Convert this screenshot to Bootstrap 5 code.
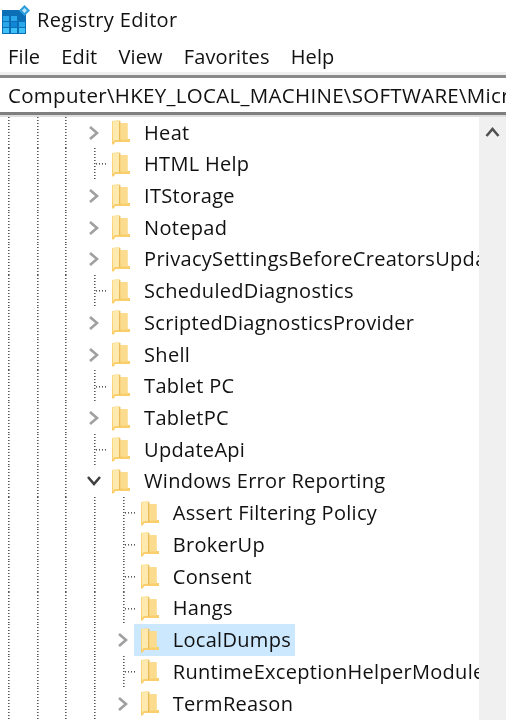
<!DOCTYPE html>
<html lang="en">
<head>
<meta charset="utf-8">
<title>Registry Editor</title>
<link href="https://cdn.jsdelivr.net/npm/bootstrap@5.3.0/dist/css/bootstrap.min.css" rel="stylesheet">
<style>
html,body{height:720px;overflow:hidden;background:#fff}
body{font-family:"Open Sans","Noto Sans","Liberation Sans",sans-serif;color:#111;font-size:20px;line-height:1}
.shell{width:506px;height:720px;overflow:hidden;filter:blur(.4px)}
.titlerow{height:40px;padding-left:2px;gap:7px}
.titlerow span{font-size:20px;letter-spacing:.35px}
.menurow{height:35px;padding-left:8px;gap:21px;font-size:20px;letter-spacing:.15px}
.addr{height:40px;border-top:3px solid #8a8a8a;border-bottom:3px solid #7f7f7f;box-shadow:0 -3px 0 #f0f0f0,0 2px 0 #ddd;padding-left:8px;font-size:20.5px;white-space:nowrap;overflow:hidden;letter-spacing:.3px}
.treewrap{height:605px;margin-top:2px}
.treepane{width:479px;overflow:hidden}
.sbar{width:27px;background:#f0f0f0}
.sbar svg{margin:9px 0 0 6px;display:block}
.trow{height:31.72px;white-space:nowrap;font-size:20px;letter-spacing:.3px}
.gd{width:28.7px;height:100%;flex:none;background:repeating-linear-gradient(to bottom,#555 0 1px,transparent 1px 3px) 8px 0/1.6px 100% no-repeat}
.xp{width:26px;height:100%;flex:none;display:flex;align-items:center;justify-content:flex-start;padding-left:2px}
.xpd{padding-left:0}
.lf{width:26px;height:100%;flex:none;background:repeating-linear-gradient(to bottom,#555 0 1px,transparent 1px 3px) 8px 0/1.6px 100% no-repeat,repeating-linear-gradient(to right,#555 0 1px,transparent 1px 3px) 10px 50%/12px 1.6px no-repeat}
.fd{width:18px;height:25px;flex:none;margin-right:14px}
.sel{background:#cce8ff;margin-left:-7px;padding-left:7px;padding-right:4px;height:100%;display:flex;align-items:center}
</style>
</head>
<body>
<svg width="0" height="0" class="d-block" aria-hidden="true">
<defs>
<linearGradient id="fg" x1="0" y1="0" x2="0" y2="1"><stop offset="0" stop-color="#fbdc8b"/><stop offset="1" stop-color="#f9cc66"/></linearGradient>
<symbol id="folder" viewBox="0 0 18 25">
<path d="M0 1 L7.5 0 V3 H15.5 V19 H18 V22 H3.5 L1 25 L0 24Z" fill="url(#fg)"/>
<path d="M1 1.6 L7 .8 V20 H2.5 L1 22.5Z" fill="#fee9ae"/>
<path d="M7.2 1 H8.4 V20.6 H7.2Z" fill="#e6b553"/>
<path d="M8.4 3 H15.5 V19.5 H8.4Z" fill="#fbdc8f"/>
</symbol>
<symbol id="cr" viewBox="0 0 12 16"><path d="M2 2 L9 8 L2 14" fill="none" stroke="#a0a0a0" stroke-width="2.6"/></symbol>
<symbol id="cd" viewBox="0 0 16 12"><path d="M2 2 L8 9 L14 2" fill="none" stroke="#404040" stroke-width="2.6"/></symbol>
</defs>
</svg>
<div class="shell d-flex flex-column">
<div class="titlerow d-flex align-items-center">
<svg width="28" height="29" viewBox="0 0 28 29" aria-hidden="true">
<rect x="0" y="5" width="24" height="24" fill="#0c6fb5"/>
<g fill="#2aa7ea">
<rect x="1" y="11" width="6" height="5"/><rect x="9" y="11" width="6" height="5"/>
<rect x="1" y="17" width="6" height="5"/><rect x="9" y="17" width="6" height="5" fill="#0f86d6"/><rect x="17" y="17" width="6" height="5"/>
<rect x="1" y="23" width="6" height="5" fill="#3cc0f5"/><rect x="9" y="23" width="6" height="5" fill="#3cc0f5"/><rect x="17" y="23" width="6" height="5" fill="#3cc0f5"/>
</g>
<path d="M22.5 0 L28 5.5 L22.5 11 L17 5.5Z" fill="#2f9fdc"/><path d="M22.5 3 L25 5.5 L22.5 8 L20 5.5Z" fill="#bfe6fa"/>
</svg>
<span>Registry Editor</span>
</div>
<div class="menurow d-flex align-items-center"><span>File</span><span>Edit</span><span>View</span><span>Favorites</span><span>Help</span></div>
<div class="addr d-flex align-items-center">Computer\HKEY_LOCAL_MACHINE\SOFTWARE\Microsoft\Windows</div>
<div class="treewrap d-flex">
<div class="treepane" id="tree"></div>
<div class="sbar"><svg width="15" height="12" viewBox="0 0 15 12" aria-hidden="true"><path d="M1.5 10 L7.5 3 L13.5 10" fill="none" stroke="#505050" stroke-width="2.6"/></svg></div>
</div>
</div>
<script>
var F='<svg class="fd" aria-hidden="true"><use href="#folder"/></svg>';
var CR='<span class="xp"><svg width="12" height="16" aria-hidden="true"><use href="#cr"/></svg></span>';
var CD='<span class="xp xpd"><svg width="16" height="12" aria-hidden="true"><use href="#cd"/></svg></span>';
var G='<span class="gd"></span>',L='<span class="lf"></span>';
var rows=[[0,'c','Heat'],[0,'l','HTML Help'],[0,'c','ITStorage'],[0,'c','Notepad'],[0,'c','PrivacySettingsBeforeCreatorsUpdate'],[0,'l','ScheduledDiagnostics'],[0,'c','ScriptedDiagnosticsProvider'],[0,'c','Shell'],[0,'l','Tablet PC'],[0,'c','TabletPC'],[0,'l','UpdateApi'],[0,'d','Windows Error Reporting'],[1,'l','Assert Filtering Policy'],[1,'l','BrokerUp'],[1,'l','Consent'],[1,'l','Hangs'],[1,'s','LocalDumps'],[1,'l','RuntimeExceptionHelperModules'],[1,'c','TermReason']];
var h='';
rows.forEach(function(r){
 h+='<div class="trow d-flex align-items-center">'+G+G+G;
 if(r[0]){h+=G;}
 var k=r[1];
 h+=(k==='l'?L:k==='d'?CD:CR);
 if(k==='s'){h+='<span class="sel">'+F+'<span>'+r[2]+'</span></span>';}
 else{h+=F+'<span>'+r[2]+'</span>';}
 h+='</div>';
});
document.getElementById('tree').innerHTML=h;
</script>
<script src="https://cdn.jsdelivr.net/npm/bootstrap@5.3.0/dist/js/bootstrap.bundle.min.js"></script>
</body>
</html>
